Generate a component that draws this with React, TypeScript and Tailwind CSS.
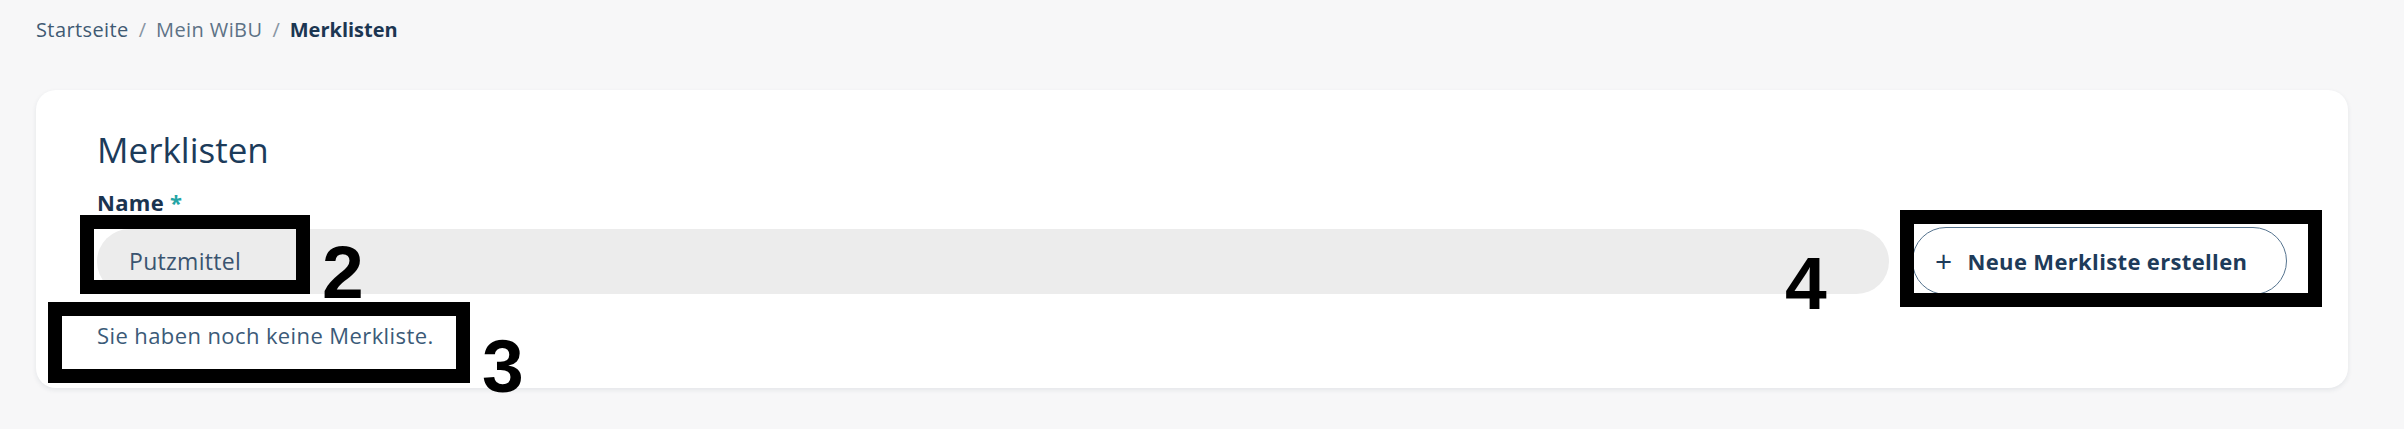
import React from 'react';

const Mark = ({ className }: { className: string }) => (
  <div className={`pointer-events-none absolute border-[14px] border-black ${className}`} />
);

const Num = ({ children, className }: { children: React.ReactNode; className: string }) => (
  <div
    className={`pointer-events-none absolute font-['Liberation_Sans',Arial,sans-serif] text-[75px] font-bold leading-none text-black ${className}`}
  >
    {children}
  </div>
);

export default function App() {
  return (
    <div className="relative min-h-[429px] bg-[#f7f7f8] pb-[41px] font-['Open_Sans','Noto_Sans',sans-serif]">
      {/* breadcrumb */}
      <nav className="flex items-center gap-[10px] pl-[36px] pt-[20px] text-[20px] leading-[20px]">
        <span className="tracking-[0.4px] text-[#3f5a73]">Startseite</span>
        <span className="text-[#8795a3]">/</span>
        <span className="tracking-[0.4px] text-[#5d7286]">Mein WiBU</span>
        <span className="text-[#8795a3]">/</span>
        <span className="font-bold text-[#1c3652]">Merklisten</span>
      </nav>

      {/* card */}
      <div className="ml-[36px] mr-[56px] mt-[50px] rounded-[20px] bg-white px-[61px] pb-[40px] pt-[40px] shadow-[0_2px_5px_rgba(30,50,80,0.09)]">
        <h1 className="text-[35px] leading-[40px] text-[#1c3b5a]">Merklisten</h1>

        <label className="mt-[20px] block text-[22px] font-bold leading-[24px] tracking-[0.3px] text-[#1a3450]">
          Name <span className="text-[#23a5a5]">*</span>
        </label>

        <div className="mt-[13px] flex items-center gap-[23px]">
          <div className="flex h-[65px] flex-1 items-center rounded-full bg-[#ececec] pl-[32px] text-[23px] tracking-[0.3px] text-[#3a5470]">
            Putzmittel
          </div>
          <button className="flex h-[68px] w-[375px] items-center gap-[15px] rounded-full border-[1.5px] border-[#56748f] bg-white pl-[22px] text-[22px] font-bold tracking-[0.35px] text-[#1e3b5a]">
            <span className="text-[30px] font-normal leading-none">+</span>
            Neue Merkliste erstellen
          </button>
        </div>

        <p className="mt-[27px] text-[22px] leading-[26px] tracking-[0.4px] text-[#3b5a78]">Sie haben noch keine Merkliste.</p>
      </div>

      {/* annotation overlays */}
      <Mark className="left-[80px] top-[215px] h-[79px] w-[230px]" />
      <Num className="left-[322px] top-[235px]">2</Num>
      <Mark className="left-[48px] top-[302px] h-[81px] w-[422px]" />
      <Num className="left-[482px] top-[329px]">3</Num>
      <Mark className="left-[1900px] top-[210px] h-[97px] w-[422px]" />
      <Num className="left-[1785px] top-[246px]">4</Num>
    </div>
  );
}
